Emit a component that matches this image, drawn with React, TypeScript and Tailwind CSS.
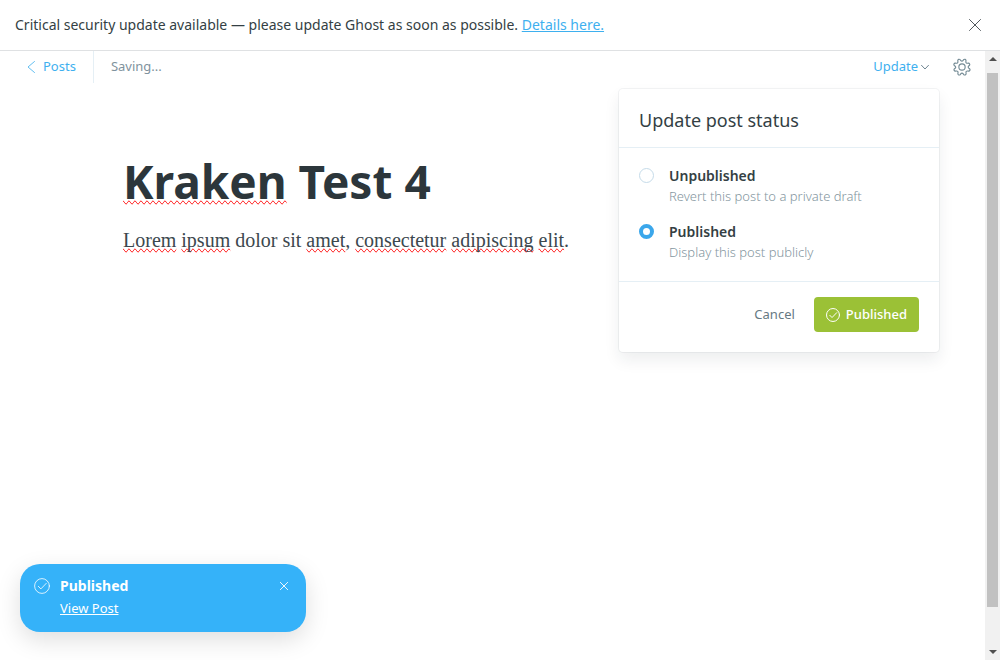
import React, { useState } from "react";

const misspelt = "[text-decoration-line:spelling-error]";

function Chevron({ className, d }: { className: string; d: string }) {
  return (
    <svg className={className} viewBox="0 0 12 12" fill="none" stroke="currentColor" strokeLinecap="round" strokeLinejoin="round" aria-hidden="true">
      <path d={d} vectorEffect="non-scaling-stroke" />
    </svg>
  );
}

function Cross({ className }: { className: string }) {
  return (
    <svg className={className} viewBox="0 0 12 12" fill="none" stroke="currentColor" strokeLinecap="round" aria-hidden="true">
      <path d="M.5.5l11 11M11.5.5l-11 11" vectorEffect="non-scaling-stroke" />
    </svg>
  );
}

function CheckCircle({ className }: { className: string }) {
  return (
    <svg className={className} viewBox="0 0 16 16" fill="none" stroke="currentColor" strokeLinecap="round" strokeLinejoin="round" aria-hidden="true">
      <circle cx="8" cy="8" r="7.4" vectorEffect="non-scaling-stroke" />
      <path d="M4.3 8.3l2.6 2.6 5.4-5.6" vectorEffect="non-scaling-stroke" />
    </svg>
  );
}

function Gear({ className }: { className: string }) {
  return (
    <svg className={className} viewBox="0 0 24 24" fill="none" stroke="currentColor" strokeWidth="1.5" strokeLinecap="round" strokeLinejoin="round" aria-hidden="true">
      <circle cx="12" cy="12" r="4.2" />
      <path
        transform="rotate(22.5 12 12)"
        d="M13.7 2.2a1.8 1.8 0 0 0-3.4 0l-.4 1.4a1.8 1.8 0 0 1-2.6 1.1L6 4a1.8 1.8 0 0 0-2.4 2.4l.7 1.3a1.8 1.8 0 0 1-1.1 2.6l-1.4.4a1.8 1.8 0 0 0 0 3.4l1.4.4a1.8 1.8 0 0 1 1.1 2.6L3.6 18A1.8 1.8 0 0 0 6 20.4l1.3-.7a1.8 1.8 0 0 1 2.6 1.1l.4 1.4a1.8 1.8 0 0 0 3.4 0l.4-1.4a1.8 1.8 0 0 1 2.6-1.1l1.3.7a1.8 1.8 0 0 0 2.4-2.4l-.7-1.3a1.8 1.8 0 0 1 1.1-2.6l1.4-.4a1.8 1.8 0 0 0 0-3.4l-1.4-.4a1.8 1.8 0 0 1-1.1-2.6l.7-1.300A1.8 1.8 0 0 0 18 4l-1.3.7a1.8 1.8 0 0 1-2.6-1.1z"
      />
    </svg>
  );
}

function Scrollbar() {
  return (
    <div className="flex w-[15px] shrink-0 flex-col items-center bg-[#f1f1f1]" aria-hidden="true">
      <div className="flex h-[22px] w-full shrink-0 items-start justify-center pt-1.5">
        <svg className="h-[5px] w-2" viewBox="0 0 8 5" fill="#505050"><path d="M4 0l4 4H0z" /></svg>
      </div>
      <div className="w-[11px] grow bg-[#c1c1c1]" />
      <div className="flex h-[53px] w-full shrink-0 items-end justify-center pb-1.5">
        <svg className="h-[5px] w-2" viewBox="0 0 8 5" fill="#505050"><path d="M4 5l4-4H0z" /></svg>
      </div>
    </div>
  );
}

type Status = "unpublished" | "published";

const options: { value: Status; title: string; note: string }[] = [
  { value: "unpublished", title: "Unpublished", note: "Revert this post to a private draft" },
  { value: "published", title: "Published", note: "Display this post publicly" },
];

function StatusMenu() {
  const [status, setStatus] = useState<Status>("published");
  return (
    <section className="absolute top-[38px] right-[46px] z-10 w-80 rounded bg-white shadow-[0_0_0_1px_rgba(99,114,130,0.08),0_8px_16px_rgba(27,39,51,0.08)]">
      <h2 className="border-b border-[#e5eff5] px-5 pt-[19px] pb-[15px] text-lg leading-6 text-[#343f44]">Update post status</h2>
      <div className="flex flex-col gap-4 border-b border-[#e5eff5] px-5 pt-[18px] pb-[19px]">
        {options.map((o) => (
          <div key={o.value} className="flex items-start gap-[15px]">
            <input
              type="radio"
              name="status"
              id={o.value}
              checked={status === o.value}
              onChange={() => setStatus(o.value)}
              className="mt-0.5 size-[15px] shrink-0 appearance-none rounded-full border border-[#c5dbe9] bg-white checked:border-4 checked:border-[#3ba7eb]"
            />
            <label htmlFor={o.value} className="flex flex-col">
              <span className="text-sm leading-5 font-semibold text-[#343f44]">{o.title}</span>
              <span className="text-[13px] leading-5 font-light text-[#8496a0]">{o.note}</span>
            </label>
          </div>
        ))}
      </div>
      <div className="flex items-center justify-end gap-[19px] px-5 pt-[15px] pb-5">
        <button type="button" className="text-[13px] text-[#667983]">Cancel</button>
        <button type="button" className="flex h-[35px] items-center gap-1.5 rounded bg-[#9bc136] px-3 text-[13px] font-medium text-white">
          <CheckCircle className="size-3.5" />
          Published
        </button>
      </div>
    </section>
  );
}

export default function App() {
  return (
    <div className="flex h-screen flex-col bg-white font-['Noto_Sans',sans-serif] text-[#343f44]">
      <aside className="flex h-[51px] shrink-0 items-center justify-between border-b border-[#dfe1e3] px-[15px]">
        <p className="text-sm">
          Critical security update available — please update Ghost as soon as possible.{" "}
          <a href="#details" className="text-[#3eb0ef] underline">Details here.</a>
        </p>
        <button type="button" aria-label="Dismiss" className="p-1 text-[#50585d]">
          <Cross className="size-3" />
        </button>
      </aside>
      <div className="flex min-h-0 grow">
        <div className="relative min-w-0 grow">
          <header className="flex h-8 items-center justify-between pr-3.5 pl-[26px]">
            <div className="flex items-center self-stretch">
              <a href="#posts" className="flex items-center gap-[5px] self-stretch border-r border-[#e5eff5] pr-[17px] text-[13px] text-[#3eb0ef]">
                <Chevron className="size-3 opacity-80" d="M8.500.5L2 6l6.500 5.500" />
                Posts
              </a>
              <span className="pl-[17px] text-[13px] text-[#7f929d]">Saving...</span>
            </div>
            <div className="flex items-center gap-6">
              <button type="button" className="flex items-center gap-[3px] text-[13px] text-[#3eb0ef]">
                Update
                <Chevron className="size-2 text-[#6f8591]" d="M.8 3.5L6 9l5.2-5.5" />
              </button>
              <button type="button" aria-label="Settings" className="text-[#738a94]">
                <Gear className="size-[18px]" />
              </button>
            </div>
          </header>
          <StatusMenu />
          <main className="px-[123px] pt-[68px]">
            <h1 className="text-[46px] leading-[60px] font-bold text-[#2c363b]">
              <span className={misspelt}>Kraken</span> Test 4
            </h1>
            <p className="mt-[15px] font-['Liberation_Serif',serif] text-xl leading-7 text-[#3c484e]">
              <span className={misspelt}>Lorem</span> <span className={misspelt}>ipsum</span> dolor sit{" "}
              <span className={misspelt}>amet</span>, <span className={misspelt}>consectetur</span>{" "}
              <span className={misspelt}>adipiscing</span> <span className={misspelt}>elit</span>.
            </p>
          </main>
          <div role="status" className="absolute bottom-7 left-5 flex h-[68px] w-[286px] items-start rounded-[20px] bg-[#35b2f9] px-3.5 pt-3 text-white shadow-[0_8px_24px_rgba(0,0,0,0.13)]">
            <CheckCircle className="mt-0.5 size-4 text-white/80" />
            <div className="ml-2.5 flex grow flex-col items-start">
              <strong className="text-sm leading-5 font-bold">Published</strong>
              <a href="#post" className="mt-0.5 text-[13px] leading-5 underline">View Post</a>
            </div>
            <button type="button" aria-label="Close" className="mt-1.5 mr-1 text-white/90">
              <Cross className="size-2" />
            </button>
          </div>
        </div>
        <Scrollbar />
      </div>
    </div>
  );
}
